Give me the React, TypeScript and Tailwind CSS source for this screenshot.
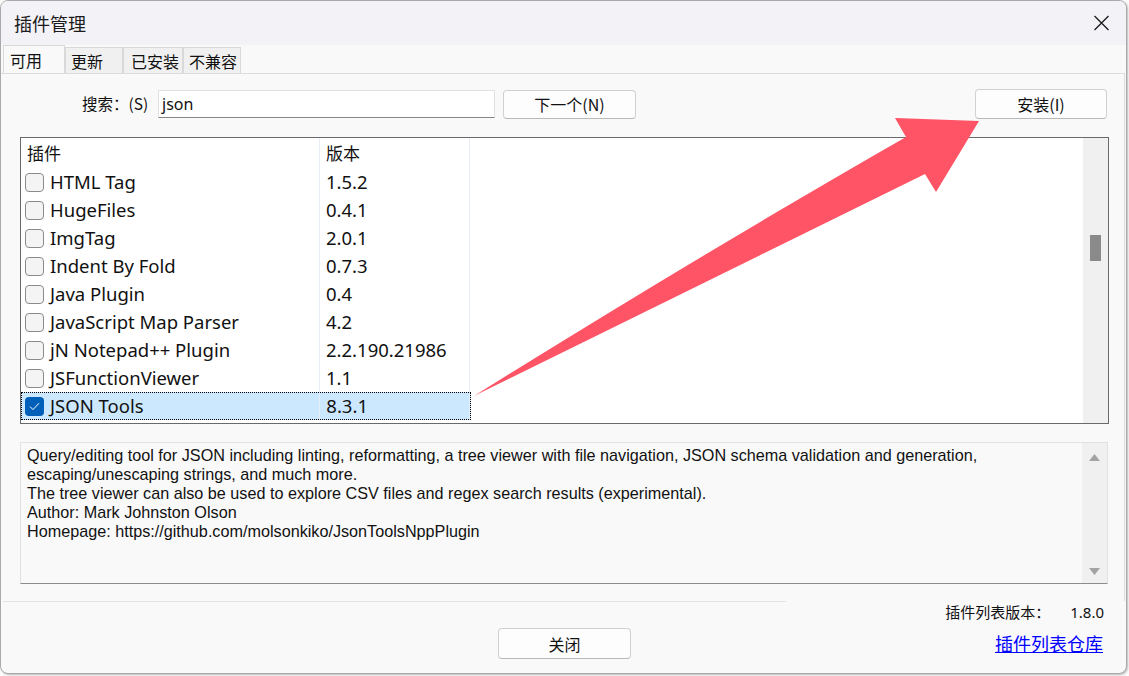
import React from 'react';

type Plugin = { name: string; version: string; checked?: boolean };

const plugins: Plugin[] = [
  { name: 'HTML Tag', version: '1.5.2' },
  { name: 'HugeFiles', version: '0.4.1' },
  { name: 'ImgTag', version: '2.0.1' },
  { name: 'Indent By Fold', version: '0.7.3' },
  { name: 'Java Plugin', version: '0.4' },
  { name: 'JavaScript Map Parser', version: '4.2' },
  { name: 'jN Notepad++ Plugin', version: '2.2.190.21986' },
  { name: 'JSFunctionViewer', version: '1.1' },
  { name: 'JSON Tools', version: '8.3.1', checked: true },
];

const cjk = "font-['Noto_Sans_CJK_SC',sans-serif]";
const ui = "font-['Noto_Sans','Noto_Sans_CJK_SC',sans-serif]";

function Checkbox({ checked }: { checked?: boolean }) {
  if (checked) {
    return (
      <span className="flex h-[19px] w-[19px] shrink-0 items-center justify-center rounded-[4px] bg-[#005fb8]">
        <svg width="11" height="9" viewBox="0 0 11 9" fill="none">
          <path d="M1 4.6 L4 7.6 L10 1.2" stroke="white" strokeWidth="1" />
        </svg>
      </span>
    );
  }
  return (
    <span className="h-[19px] w-[19px] shrink-0 rounded-[4px] border border-[#8b8b8b] bg-[#f4f4f4]" />
  );
}

function Tab({ label, active, width }: { label: string; active?: boolean; width: string }) {
  return (
    <div
      className={`${width} flex items-center border border-b-0 border-[#d9d9d9] ${
        active ? 'h-[28px] bg-[#f9f9f9] pl-[6px]' : 'h-[26px] bg-[#f0f0f0] pl-[5px]'
      } text-[16px] leading-none text-[#111] ${cjk}`}
    >
      {label}
    </div>
  );
}

function Button({ children, width, height }: { children: React.ReactNode; width: string; height: string }) {
  return (
    <div
      className={`${width} ${height} flex items-center justify-center rounded-[4px] border border-[#d0d0d0] border-b-[#b8b8b8] bg-[#fdfdfd] text-[16px] text-[#111] ${cjk}`}
    >
      {children}
    </div>
  );
}

export default function App() {
  return (
    <div className="relative h-[676px] w-[1129px] overflow-hidden bg-[#fbfbfb]">
      <div className="flex h-[674px] w-[1127px] flex-col overflow-hidden rounded-[8px] border border-[#a9a9a9] bg-[#f9f9f9] shadow-[1px_1px_2px_rgba(0,0,0,0.25)]">
        {/* title bar */}
        <div className="flex h-[44px] shrink-0 items-center justify-between bg-[#f3f2f6] pl-[13px] pr-[14px]">
          <span className={`text-[18px] text-[#1b1b1b] ${cjk}`}>插件管理</span>
          <svg width="17" height="16" viewBox="0 0 17 16" className="mr-[2px]">
            <path d="M1.5 1 L15.5 15 M15.5 1 L1.5 15" stroke="#1b1b1b" strokeWidth="1.3" />
          </svg>
        </div>

        {/* tabs */}
        <div className="flex h-[28px] shrink-0 items-end pl-[2px]">
          <Tab label="可用" active width="w-[62px]" />
          <Tab label="更新" width="w-[58px]" />
          <Tab label="已安装" width="w-[60px] pl-[7px]" />
          <Tab label="不兼容" width="w-[58px]" />
        </div>

        {/* page */}
        <div className="mr-[1px] flex h-[528px] shrink-0 flex-col border-r border-t border-[#dcdcdc] pt-[15px]">
          <div className="flex h-[30px] items-center pr-[17px]">
            <span className={`ml-[81px] w-[76px] text-[15.5px] text-[#111] ${cjk}`}>搜索：(S)</span>
            <div className="flex h-[28px] w-[337px] items-center border border-[#e2e2e2] border-b-[#868686] bg-white pl-[3px] text-[16px] text-[#111] font-['Noto_Sans',sans-serif]">
              json
            </div>
            <div className="ml-[8px]">
              <Button width="w-[133px]" height="h-[29px]">下一个(N)</Button>
            </div>
            <div className="ml-auto">
              <Button width="w-[132px]" height="h-[30px]">安装(I)</Button>
            </div>
          </div>

          {/* plugin list */}
          <div className="ml-[19px] mt-[18px] flex h-[287px] w-[1089px] border border-[#6a6a6a] bg-white">
            <div className={`flex-1 ${ui} text-[18.5px] text-[#111]`}>
              <div className="flex h-[30px]">
                <div className={`flex w-[299px] items-center border-r border-[#e8eef6] pl-[6px] text-[17px] ${cjk}`}>插件</div>
                <div className={`flex w-[150px] items-center border-r border-[#e8eef6] pl-[6px] text-[17px] ${cjk}`}>版本</div>
              </div>
              {plugins.map((p) => (
                <div
                  key={p.name}
                  className={`flex h-[28px] ${
                    p.checked ? 'w-[450px] border border-dotted border-black bg-[#cce8ff]' : ''
                  }`}
                >
                  <div className={`flex w-[299px] items-center gap-[6px] border-r border-[#e8eef6] ${p.checked ? 'pl-[3px]' : 'pl-[4px]'}`}>
                    <Checkbox checked={p.checked} />
                    <span>{p.name}</span>
                  </div>
                  <div className="flex w-[150px] items-center border-r border-[#e8eef6] pl-[6px]">{p.version}</div>
                </div>
              ))}
            </div>
            <div className="w-[25px] bg-[#f0f0f0] pl-[7px] pt-[97px]">
              <div className="h-[26px] w-[11px] bg-[#8a8a8a]" />
            </div>
          </div>

          {/* description */}
          <div className="ml-[19px] mt-[18px] flex h-[142px] w-[1088px] border border-[#e2e2e2] border-b-[#8c8c8c] bg-[#f9f9f9]">
            <div className="flex-1 pl-[6px] pt-[3px] text-[16.2px] leading-[19px] text-[#111] font-['Liberation_Sans',sans-serif]">
              <p>
                Query/editing tool for JSON including linting, reformatting, a tree viewer with file navigation, JSON schema validation and generation,
                <br />
                escaping/unescaping strings, and much more.
              </p>
              <p>The tree viewer can also be used to explore CSV files and regex search results (experimental).</p>
              <p>Author: Mark Johnston Olson</p>
              <p>Homepage: https://github.com/molsonkiko/JsonToolsNppPlugin</p>
            </div>
            <div className="flex w-[25px] flex-col items-center justify-between bg-[#f0f0f0] pb-[8px] pt-[11px]">
              <svg width="11" height="7" viewBox="0 0 11 7">
                <path d="M5.5 0 L11 7 L0 7 Z" fill="#a3a3a3" />
              </svg>
              <svg width="11" height="7" viewBox="0 0 11 7">
                <path d="M0 0 L11 0 L5.5 7 Z" fill="#a3a3a3" />
              </svg>
            </div>
          </div>
        </div>

        {/* footer */}
        <div className="flex flex-1 flex-col">
          <div className="ml-[2px] h-px w-[783px] bg-[#e4e4e4]" />
          <div className={`flex h-[20px] items-center justify-end pr-[22px] text-[15px] text-[#111] ${cjk}`}>
            <span>插件列表版本：</span>
            <span className="ml-[20px] font-['Noto_Sans',sans-serif]">1.8.0</span>
          </div>
          <div className="mt-[6px] flex items-center pr-[23px]">
            <div className="ml-[497px]">
              <Button width="w-[133px]" height="h-[31px]">关闭</Button>
            </div>
            <span className={`ml-auto text-[18px] text-[#0000ff] underline ${cjk}`}>插件列表仓库</span>
          </div>
        </div>
      </div>

      {/* callout arrow */}
      <svg className="pointer-events-none absolute left-0 top-0" width="1129" height="676" viewBox="0 0 1129 676">
        <path
          d="M474 396 Q700 255 906 137 L895 118 L979 121 L936 192 L925 174 Q720 275 474 396 Z"
          fill="#fe5466"
        />
      </svg>
    </div>
  );
}
